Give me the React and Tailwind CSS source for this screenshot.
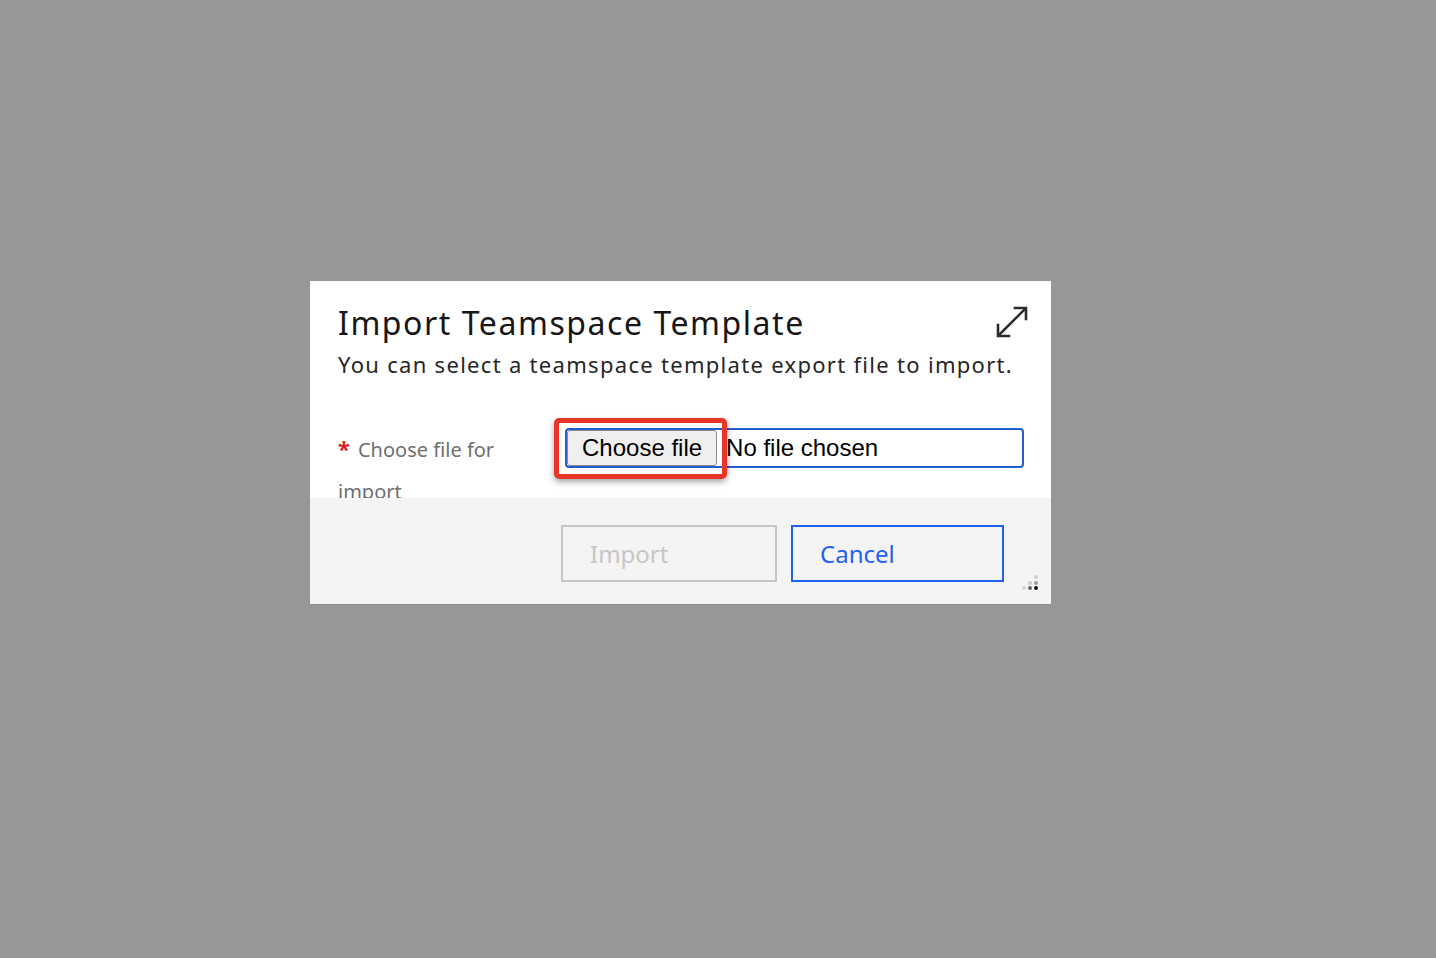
import React from 'react';

const plex = { fontFamily: '"Noto Sans", "Open Sans", sans-serif' };

function ExpandIcon() {
  return (
    <svg width="34" height="34" viewBox="0 0 34 34" fill="none" stroke="#2b2b2b" strokeWidth="2.6" strokeLinecap="square">
      <path d="M4 30 L30 4" />
      <path d="M20 3 H31 V14" />
      <path d="M3 20 V31 H14" />
    </svg>
  );
}

function ResizeGrip() {
  return (
    <svg width="20" height="18" viewBox="0 0 20 18">
      <circle cx="17" cy="3" r="2" fill="#d0d0d0" />
      <circle cx="11" cy="9" r="2" fill="#c8c8c8" />
      <circle cx="17" cy="9" r="2" fill="#9a9a9a" />
      <circle cx="5" cy="14" r="2" fill="#d4d4d4" />
      <circle cx="11" cy="14" r="2" fill="#666" />
      <circle cx="17" cy="14" r="2" fill="#111" />
    </svg>
  );
}

export default function App() {
  return (
    <div className="w-full h-[958px] bg-[#979797] pt-[281px] pl-[310px]">
      <div className="w-[741px] h-[324px] bg-white flex flex-col border-b border-[#8a8a8a]" style={plex}>
        {/* Header */}
        <div className="pl-[28px] pr-[22px] pt-[20px]">
          <div className="flex justify-between items-start h-[44px]">
            <h1 className="text-[32px] leading-[44px] text-[#161616] tracking-[1.55px] whitespace-nowrap">Import Teamspace Template</h1>
            <div className="pt-[4px]">
              <ExpandIcon />
            </div>
          </div>
          <p className="mt-[4px] -mb-[4px] text-[22px] leading-[30px] text-[#262626] tracking-[1.3px] whitespace-nowrap">
            You can select a teamspace template export file to import.
          </p>
        </div>

        {/* Field row */}
        <div className="flex h-[123px] overflow-hidden pl-[28px] pt-[53px]">
          <div className="w-[227px] pr-[20px] text-[20px] leading-[42px] text-[#6f6f6f] -mt-[1px]">
            <span className="text-[#da1e28] font-bold text-[22px] mr-[8px]">*</span>
            Choose file for import
          </div>
          <div className="relative">
            <div className="w-[459px] h-[40px] border-2 border-[#1f5fd6] rounded-[4px] flex items-center" style={{ fontFamily: '"Liberation Sans", Arial, sans-serif' }}>
              <div className="h-[36px] px-[14px] bg-[#efefef] border border-[#8a8a8a] rounded-[3px] flex items-center text-[24px] text-black">
                Choose file
              </div>
              <span className="pl-[9px] text-[24px] text-black">No file chosen</span>
            </div>
            <div className="absolute -left-[11px] -top-[10px] w-[173px] h-[61px] border-[5px] border-[#e8352a] rounded-[5px] shadow-[0_3px_6px_rgba(0,0,0,0.35)]" />
          </div>
        </div>

        {/* Footer */}
        <div className="flex-1 bg-[#f4f4f4] flex justify-end items-start pt-[27px] pr-[47px] gap-[14px] relative">
          <button className="w-[216px] h-[57px] border-2 border-[#c6c6c6] text-left pl-[27px] text-[24px] text-[#c6c6c6]" style={plex}>
            Import
          </button>
          <button className="w-[213px] h-[57px] border-2 border-[#1f62f0] text-left pl-[27px] text-[24px] text-[#1f62f0]" style={plex}>
            Cancel
          </button>
          <div className="absolute right-[12px] bottom-[12px]">
            <ResizeGrip />
          </div>
        </div>
      </div>
    </div>
  );
}
